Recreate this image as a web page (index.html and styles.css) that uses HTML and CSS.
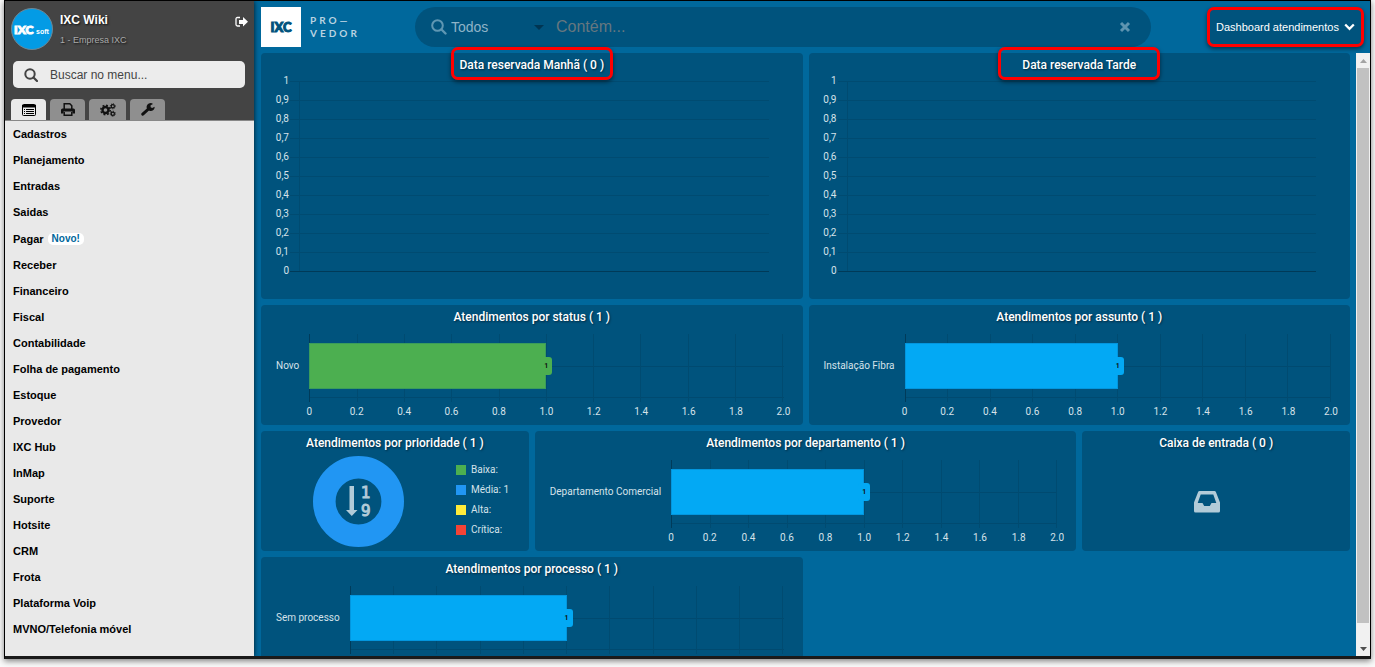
FILE: index.html
```html
<!DOCTYPE html>
<html lang="pt-BR">
<head>
<meta charset="utf-8">
<meta name="viewport" content="width=device-width, initial-scale=1">
<title>IXC Provedor</title>
<link rel="stylesheet" href="styles.css">
</head>
<body>
<div class="app">
  <aside class="sidebar">
    <div class="side-top">
      <div class="user">
        <svg class="avatar" viewBox="0 0 42 42" role="img" aria-label="IXC soft">
          <circle cx="21" cy="21" r="20.5" fill="#039be5" stroke="#6f8794"/>
          <text x="3" y="26" class="avatar-main">IXC</text>
          <text x="25" y="26" class="avatar-sub">soft</text>
        </svg>
        <div class="user-text">
          <strong class="user-name">IXC Wiki</strong>
          <span class="user-company">1 - Empresa IXC</span>
        </div>
        <button class="icon-btn" aria-label="Sair">
          <svg width="13" height="12" viewBox="0 0 13 12"><path d="M5 1.500H2.500Q1 1.500 1 3v5.500Q1 10 2.500 10H5" fill="none" stroke="#fff" stroke-width="1.300"/><path d="M4 4h4V1l5 4.800-5 4.700V8H4z" fill="#fff"/></svg>
        </button>
      </div>
      <label class="side-search">
        <svg width="14" height="14" viewBox="0 0 14 14"><circle cx="6" cy="6" r="4.700" fill="none" stroke="#444" stroke-width="2"/><path d="M9.500 9.500l3.500 3.500" stroke="#444" stroke-width="2.200" stroke-linecap="round"/></svg>
        <input type="text" placeholder="Buscar no menu..." aria-label="Buscar no menu">
      </label>
      <div class="tabs">
        <button class="tab active" aria-label="Menu">
          <svg width="14" height="12" viewBox="0 0 14 12"><rect x=".5" y=".5" width="13" height="11" rx="1" fill="none" stroke="#000"/><path d="M0 1h14v2.500H0zM2 5h1v1H2zM4 5h8v1H4zM2 7h1v1H2zM4 7h8v1H4zM2 9h1v1H2zM4 9h8v1H4z"/></svg>
        </button>
        <button class="tab" aria-label="Relatórios">
          <svg width="14" height="13" viewBox="0 0 14 13"><path d="M3.200 6V.8h5.600l2 2V6M3.200 9v3.200h7.600V9" fill="none" stroke="#111" stroke-width="1.500"/><path d="M1.500 5.500h11Q14 5.500 14 7v3.500h-2.500V8.500h-9v2H0V7q0-1.500 1.500-1.500z" fill="#111"/></svg>
        </button>
        <button class="tab wide" aria-label="Configurações">
          <svg width="16" height="14" viewBox="0 0 16 14"><circle cx="5.500" cy="7" r="3" fill="none" stroke="#111" stroke-width="2.400"/><circle cx="5.500" cy="7" r="4.700" fill="none" stroke="#111" stroke-width="1.500" stroke-dasharray="1.850 1.850"/><g fill="none" stroke="#111"><circle cx="12.800" cy="3.300" r="1.600" stroke-width="1.200"/><circle cx="12.800" cy="3.300" r="2.500" stroke-dasharray="1 .96"/><circle cx="12.800" cy="10.700" r="1.600" stroke-width="1.200"/><circle cx="12.800" cy="10.700" r="2.500" stroke-dasharray="1 .96"/></g></svg>
        </button>
        <button class="tab" aria-label="Ferramentas">
          <svg width="14" height="13" viewBox="0 0 14 13"><path d="M1.800 11.200L8 5.500" stroke="#111" stroke-width="3" stroke-linecap="round"/><path d="M12 .9L9.600 2.300v1.900l1.600.9 2.400-1.400A4 4 0 1 1 12 .9z" fill="#111"/></svg>
        </button>
      </div>
    </div>
    <nav class="menu">
      <a href="#">Cadastros</a>
      <a href="#">Planejamento</a>
      <a href="#">Entradas</a>
      <a href="#">Saidas</a>
      <a href="#" class="with-badge">Pagar <span class="new">Novo!</span></a>
      <a href="#">Receber</a>
      <a href="#">Financeiro</a>
      <a href="#">Fiscal</a>
      <a href="#">Contabilidade</a>
      <a href="#">Folha de pagamento</a>
      <a href="#">Estoque</a>
      <a href="#">Provedor</a>
      <a href="#">IXC Hub</a>
      <a href="#">InMap</a>
      <a href="#">Suporte</a>
      <a href="#">Hotsite</a>
      <a href="#">CRM</a>
      <a href="#">Frota</a>
      <a href="#">Plataforma Voip</a>
      <a href="#">MVNO/Telefonia móvel</a>
    </nav>
  </aside>

  <main class="main">
    <header class="topbar">
      <div class="brand">
        <div class="brand-box">IXC</div>
        <div class="brand-name"><span>PRO—</span><span>VEDOR</span></div>
      </div>
      <div class="search">
        <svg width="16" height="16" viewBox="0 0 16 16"><circle cx="6.500" cy="6.500" r="5.300" fill="none" stroke="#5f97b3" stroke-width="2"/><path d="M10.500 10.500l4 4" stroke="#5f97b3" stroke-width="2.400" stroke-linecap="round"/></svg>
        <div class="pick">
          <select aria-label="Filtro"><option>Todos</option></select>
          <svg width="10" height="5" viewBox="0 0 10 5"><path d="M0 0h10L5 5z" fill="#003552"/></svg>
        </div>
        <input type="text" placeholder="Contém..." aria-label="Busca">
        <button class="icon-btn" aria-label="Limpar">
          <svg width="12" height="12" viewBox="0 0 12 12"><path d="M2 2l8 8M10 2l-8 8" stroke="#5e94b0" stroke-width="3"/></svg>
        </button>
      </div>
      <div class="board-pick">
        <select aria-label="Painel"><option>Dashboard atendimentos</option></select>
        <svg width="11" height="8" viewBox="0 0 11 8"><path d="M1.200 1.500l4.300 4.300 4.300-4.300" fill="none" stroke="#fff" stroke-width="2.300"/></svg>
      </div>
    </header>

    <div class="scroll">
      <div class="cards">
        <section class="card tall span2">
          <h2 class="marked">Data reservada Manhã ( 0 )</h2>
          <div class="lines">
            <div>1</div><div>0,9</div><div>0,8</div><div>0,7</div><div>0,6</div><div>0,5</div><div>0,4</div><div>0,3</div><div>0,2</div><div>0,1</div><div>0</div>
          </div>
        </section>
        <section class="card tall span2">
          <h2 class="marked">Data reservada Tarde</h2>
          <div class="lines">
            <div>1</div><div>0,9</div><div>0,8</div><div>0,7</div><div>0,6</div><div>0,5</div><div>0,4</div><div>0,3</div><div>0,2</div><div>0,1</div><div>0</div>
          </div>
        </section>

        <section class="card span2">
          <h2>Atendimentos por status ( 1 )</h2>
          <div class="chart">
            <span class="cat">Novo</span>
            <div class="plot">
              <div class="rules"><i></i><i></i><i></i><i></i><i></i><i></i><i></i><i></i><i></i><i></i><i></i></div>
              <div class="bar green" style="width:50%"><b>1</b></div>
            </div>
            <div class="ticks"><span>0</span><span>0.2</span><span>0.4</span><span>0.6</span><span>0.8</span><span>1.0</span><span>1.2</span><span>1.4</span><span>1.6</span><span>1.8</span><span>2.0</span></div>
          </div>
        </section>
        <section class="card span2">
          <h2>Atendimentos por assunto ( 1 )</h2>
          <div class="chart">
            <span class="cat">Instalação Fibra</span>
            <div class="plot">
              <div class="rules"><i></i><i></i><i></i><i></i><i></i><i></i><i></i><i></i><i></i><i></i><i></i></div>
              <div class="bar" style="width:50%"><b>1</b></div>
            </div>
            <div class="ticks"><span>0</span><span>0.2</span><span>0.4</span><span>0.6</span><span>0.8</span><span>1.0</span><span>1.2</span><span>1.4</span><span>1.6</span><span>1.8</span><span>2.0</span></div>
          </div>
        </section>

        <section class="card">
          <h2>Atendimentos por prioridade ( 1 )</h2>
          <div class="priority">
            <svg width="91" height="91" viewBox="0 0 91 91">
              <circle cx="45.500" cy="45.500" r="34.200" fill="none" stroke="#2196f3" stroke-width="22.600"/>
              <path d="M36.500 30h4.500v24h3.500l-5.700 6-5.800-6h3.500z" fill="#b2cbd8"/>
              <text x="48" y="42" class="digit">1</text>
              <text x="48" y="60" class="digit">9</text>
            </svg>
            <ul class="legend">
              <li class="low">Baixa:</li>
              <li class="mid">Média: 1</li>
              <li class="high">Alta:</li>
              <li class="critical">Crítica:</li>
            </ul>
          </div>
        </section>
        <section class="card span2">
          <h2>Atendimentos por departamento ( 1 )</h2>
          <div class="chart">
            <span class="cat">Departamento Comercial</span>
            <div class="plot">
              <div class="rules"><i></i><i></i><i></i><i></i><i></i><i></i><i></i><i></i><i></i><i></i><i></i></div>
              <div class="bar" style="width:50%"><b>1</b></div>
            </div>
            <div class="ticks"><span>0</span><span>0.2</span><span>0.4</span><span>0.6</span><span>0.8</span><span>1.0</span><span>1.2</span><span>1.4</span><span>1.6</span><span>1.8</span><span>2.0</span></div>
          </div>
        </section>
        <section class="card">
          <h2>Caixa de entrada ( 0 )</h2>
          <div class="inbox">
            <svg width="26" height="22" viewBox="0 0 26 22"><path fill="#b2cbd8" fill-rule="evenodd" d="M5.500 0h15q1 0 1.400 1L26 11.500V20q0 1.500-1.500 1.500h-23Q0 21.500 0 20v-8.500L4.100 1q.4-1 1.400-1zM6.700 3.500L3.700 12h4.800l1.700 3h5.600l1.700-3h4.800l-3-8.500z"/></svg>
          </div>
        </section>

        <section class="card span2">
          <h2>Atendimentos por processo ( 1 )</h2>
          <div class="chart">
            <span class="cat">Sem processo</span>
            <div class="plot">
              <div class="rules"><i></i><i></i><i></i><i></i><i></i><i></i><i></i><i></i><i></i><i></i><i></i></div>
              <div class="bar" style="width:50%"><b>1</b></div>
            </div>
          </div>
        </section>
      </div>
      <div class="scrollbar" aria-hidden="true">
        <svg width="13" height="15" viewBox="0 0 13 15"><path d="M3 10h7L6.500 6z" fill="#a3a3a3"/></svg>
        <div class="thumb"></div>
        <svg width="13" height="15" viewBox="0 0 13 15"><path d="M3 6h7l-3.500 4z" fill="#505050"/></svg>
      </div>
    </div>
  </main>
</div>
</body>
</html>
```
FILE: styles.css
```css
*, *::before, *::after { box-sizing: border-box; }

body {
  margin: 0;
  padding: 0 4px 8px;
  background: #fafafa;
  font-family: "Liberation Sans", Arial, sans-serif;
  font-size: 11px;
}

button, select, input {
  margin: 0;
  padding: 0;
  border: 0;
  background: none;
  font: inherit;
  color: inherit;
  appearance: none;
  outline: 0;
}

svg { display: block; flex: none; }

.app {
  display: flex;
  height: calc(100vh - 8px);
  overflow: hidden;
  border: 1px solid #000;
  border-bottom: 3px solid #1a1a1a;
  box-shadow: 0 2px 6px rgba(0, 0, 0, .5);
  background: #00689c;
}

/* Sidebar */
.sidebar {
  flex: 0 0 249px;
  display: flex;
  flex-direction: column;
  background: #e9e9e9;
  box-shadow: 0 0 5px rgba(0, 0, 0, .8);
  z-index: 1;
}

.side-top {
  background: #444;
  border-bottom: 1px solid #888;
}

.user {
  display: flex;
  gap: 7px;
  padding: 7px 6px 0;
}

.avatar { width: 42px; height: 42px; }

.avatar-main {
  font: 900 12px Lato, "Liberation Sans", sans-serif;
  fill: #fff;
  stroke: #fff;
  stroke-width: 1px;
}

.avatar-sub {
  font: 700 7px "Liberation Sans", sans-serif;
  fill: #fff;
}

.user-text {
  flex: 1;
  display: flex;
  flex-direction: column;
  gap: 5px;
  padding-top: 5px;
  text-shadow: 1px 1px 2px #111;
}

.user-name { font-size: 12px; line-height: 15px; color: #fff; }
.user-company { font-size: 9px; line-height: 14px; color: #aaa; }

.icon-btn { display: flex; align-items: center; }
.user .icon-btn { height: 28px; }

.side-search {
  display: flex;
  align-items: center;
  gap: 12px;
  height: 27px;
  margin: 11px 9px 11px 8px;
  padding: 0 11px;
  border-radius: 5px;
  background: #ececec;
}

.side-search input { flex: 1; min-width: 0; font-size: 12px; }
.side-search input::placeholder { color: #444; opacity: 1; }

.tabs { display: flex; gap: 4px; padding-left: 6px; }

.tab {
  display: flex;
  align-items: center;
  justify-content: center;
  width: 35px;
  height: 21px;
  border-radius: 4px 4px 0 0;
  background: #8f8f8f;
}

.tab.wide { width: 37px; }
.tab.active { background: #e9e9e9; }

.menu a {
  display: flex;
  align-items: center;
  gap: 4px;
  height: 26px;
  padding-left: 8px;
  font-weight: 700;
  color: #000;
  text-decoration: none;
}

.menu .with-badge { height: 27px; }

.new {
  padding: 0 4px;
  border-radius: 5px;
  background: #fff;
  color: #00689c;
  font-size: 10px;
  line-height: 12px;
}

/* Top bar */
.main { flex: 1; min-width: 0; display: flex; flex-direction: column; }

.topbar {
  display: flex;
  align-items: center;
  height: 52px;
  padding: 0 6px 0 7px;
}

.brand { display: flex; align-items: center; gap: 9px; width: 154px; }

.brand-box {
  display: flex;
  align-items: center;
  justify-content: center;
  width: 40px;
  height: 40px;
  background: #fff;
  color: #00537d;
  font: 900 13px Lato, "Liberation Sans", sans-serif;
  -webkit-text-stroke: 1px #00537d;
}

.brand-name {
  display: flex;
  flex-direction: column;
  font: 700 10px/13px Lato, "Liberation Sans", sans-serif;
  letter-spacing: 3px;
  color: #b9d3e1;
}

.search {
  flex: 1;
  display: flex;
  align-items: center;
  height: 40px;
  padding: 0 20px 0 16px;
  border-radius: 20px;
  background: #00537d;
}

.search input { flex: 1; min-width: 0; margin-left: 12px; font-size: 16px; }
.search input::placeholder { color: #66777f; opacity: 1; }

.pick {
  display: flex;
  align-items: center;
  width: 97px;
  padding-left: 4px;
  color: #8fb4c8;
  font-size: 14px;
}

.pick select, .board-pick select { flex: 1; min-width: 0; }

.board-pick {
  display: flex;
  align-items: center;
  width: 157px;
  height: 40px;
  margin-left: 56px;
  padding: 0 6px;
  border: 3px solid #f00;
  border-radius: 7px;
  background: #00537d;
  box-shadow: 0 2px 4px rgba(0, 0, 0, .5);
  color: #fff;
}

/* Dashboard */
.scroll { flex: 1; min-height: 0; display: flex; }

.cards {
  flex: 1;
  min-width: 0;
  display: grid;
  grid-template-columns: repeat(4, minmax(0, 1fr));
  align-content: start;
  gap: 6px;
  padding: 0 6px 0 7px;
}

.card {
  min-height: 120px;
  border-radius: 4px;
  background: #00537d;
  color: #d5e2ea;
  font: 10px Roboto, "Liberation Sans", sans-serif;
}

.tall { min-height: 246px; }
.span2 { grid-column: span 2; }

.card h2 {
  position: relative;
  margin: 0;
  padding-top: 3px;
  text-align: center;
  font-size: 12px;
  font-weight: 500;
  line-height: 18px;
  color: #fff;
  text-shadow: 1px 1px 2px #002b42;
}

.marked::after {
  content: "";
  position: absolute;
  top: -6px;
  left: calc(50% - 81px);
  width: 162px;
  height: 33px;
  border: 3px solid #f00;
  border-radius: 7px;
  box-shadow: 0 2px 4px rgba(0, 0, 0, .5);
}

.lines {
  margin-top: -3px;
  background: linear-gradient(#004b71, #004b71) 38px 10px / 1px 190px no-repeat;
}

.lines div {
  display: flex;
  align-items: center;
  height: 19px;
  padding-right: 34px;
  justify-content: flex-end;
  gap: 1px;
}

.lines div::after {
  content: "";
  width: calc(100% - 29px);
  height: 1px;
  margin-top: 2px;
  background: #004b71;
}

.lines div:last-child::after { background: #003a58; }

.chart {
  display: grid;
  grid-template-columns: auto 1fr;
  column-gap: 10px;
  margin: 8px 19px 0 15px;
}

.cat { align-self: center; padding-bottom: 6px; }

.plot {
  display: grid;
  height: 68px;
  background:
    linear-gradient(#004a70, #004a70) 0 32px / 100% 1px no-repeat,
    linear-gradient(#004a70, #004a70) 0 63px / 100% 1px no-repeat;
}

.rules, .bar { grid-area: 1 / 1; }
.rules { display: flex; justify-content: space-between; }
.rules i { width: 1px; background: #004b71; }
.rules i:first-child { background: #003b5a; }

.bar {
  position: relative;
  height: 46px;
  margin-top: 9px;
  border: 1px solid #0396de;
  background: #03a9f4;
}

.bar b {
  position: absolute;
  top: 13px;
  right: -7px;
  width: 12px;
  border-radius: 3px;
  background: inherit;
  text-align: center;
  font-size: 7px;
  line-height: 18px;
  color: #111;
}

.bar.green { border-color: #3b9c5b; background: #4caf50; }

.ticks {
  grid-column: 2;
  display: flex;
  justify-content: space-between;
  line-height: 20px;
}

.ticks span { display: flex; justify-content: center; width: 0; }

.priority { display: flex; gap: 52px; padding: 4px 0 0 52px; }

.digit {
  font: 15px "DejaVu Sans", sans-serif;
  fill: #b2cbd8;
  stroke: #b2cbd8;
  stroke-width: 1px;
}

.legend { margin: 0; padding: 4px 0 0; list-style: none; line-height: 20px; }

.legend li { display: flex; align-items: center; gap: 5px; white-space: nowrap; }
.legend li::before { content: ""; width: 10px; height: 10px; }
.low::before { background: #4caf50; }
.mid::before { background: #2196f3; }
.high::before { background: #ffeb3b; }
.critical::before { background: #f44336; }

.inbox { display: flex; justify-content: center; padding: 39px 18px 0 0; }

/* Scrollbar */
.scrollbar {
  display: flex;
  flex-direction: column;
  width: 14px;
  padding-left: 1px;
  background: #f1f1f1;
}

.thumb { height: 92%; flex: 0 1 auto; margin-right: 1px; background: #c1c1c1; }
.scrollbar svg:last-child { margin-top: auto; }
```
